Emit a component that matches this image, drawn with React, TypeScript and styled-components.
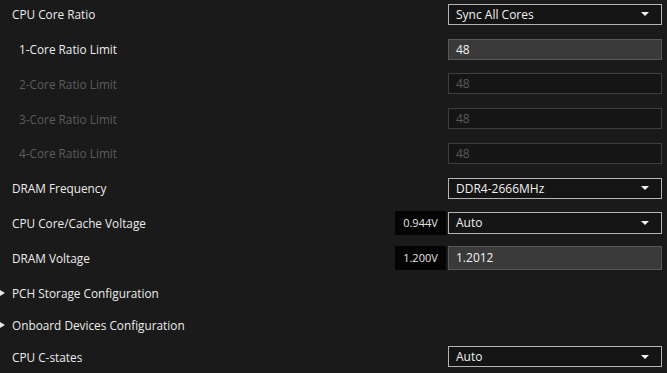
import React from "react";
import styled, { createGlobalStyle } from "styled-components";

const GlobalStyle = createGlobalStyle`
  html, body {
    margin: 0;
    padding: 0;
    background: #1a1a1a;
    overflow: hidden;
  }
  body {
    font-family: "Open Sans", "Noto Sans", sans-serif;
  }
`;

type Level = "main" | "sub" | "disabled" | "link";

type Item = {
  label: string;
  level: Level;
  height: number;
  control?: "select" | "input" | "muted" | null;
  value?: string;
  reading?: string;
};

const items: Item[] = [
  { label: "CPU Core Ratio", level: "main", height: 34.75, control: "select", value: "Sync All Cores" },
  { label: "1-Core Ratio Limit", level: "sub", height: 34.75, control: "input", value: "48" },
  { label: "2-Core Ratio Limit", level: "disabled", height: 34.75, control: "muted", value: "48" },
  { label: "3-Core Ratio Limit", level: "disabled", height: 34.75, control: "muted", value: "48" },
  { label: "4-Core Ratio Limit", level: "disabled", height: 34.75, control: "muted", value: "48" },
  { label: "DRAM Frequency", level: "main", height: 34.75, control: "select", value: "DDR4-2666MHz" },
  { label: "CPU Core/Cache Voltage", level: "main", height: 34.75, control: "select", value: "Auto", reading: "0.944V" },
  { label: "DRAM Voltage", level: "main", height: 34.75, control: "input", value: "1.2012", reading: "1.200V" },
  { label: "PCH Storage Configuration", level: "link", height: 35 },
  { label: "Onboard Devices Configuration", level: "link", height: 29 },
  { label: "CPU C-states", level: "main", height: 35, control: "select", value: "Auto" },
];

export default function App() {
  return (
    <>
      <GlobalStyle />
      <Page>
        <List>
          {items.map((item) => (
            <Row key={item.label} $height={item.height}>
              <Label $level={item.level}>
                {item.level === "link" && <Arrow />}
                {item.label}
              </Label>
              <Controls>
                {item.reading && <Reading>{item.reading}</Reading>}
                {item.control === "select" && (
                  <Select $tall={!!item.reading}>
                    <span>{item.value}</span>
                    <Caret />
                  </Select>
                )}
                {item.control === "input" && (
                  <Field $tall={!!item.reading}>{item.value}</Field>
                )}
                {item.control === "muted" && <MutedField>{item.value}</MutedField>}
              </Controls>
            </Row>
          ))}
        </List>
      </Page>
    </>
  );
}

const Page = styled.div`
  width: 667px;
  height: 373px;
  background: #1a1a1a;
  overflow: hidden;
`;

const List = styled.div`
  display: flex;
  flex-direction: column;
  margin-top: -3px;
`;

const Row = styled.div<{ $height: number }>`
  display: flex;
  align-items: center;
  justify-content: space-between;
  height: ${({ $height }) => $height}px;
  padding-right: 5px;
`;

const Label = styled.div<{ $level: Level }>`
  position: relative;
  font-size: 11.8px;
  padding-left: ${({ $level }) => ($level === "sub" || $level === "disabled" ? 19 : 12)}px;
  color: ${({ $level }) => ($level === "disabled" ? "#5c5c5c" : "#ececec")};
  white-space: nowrap;
`;

const Arrow = styled.span`
  position: absolute;
  left: 0;
  top: 50%;
  margin-top: -3px;
  width: 0;
  height: 0;
  border-top: 3px solid transparent;
  border-bottom: 3px solid transparent;
  border-left: 5px solid #e8e8e8;
`;

const Controls = styled.div`
  display: flex;
  align-items: center;
  gap: 2px;
`;

const Reading = styled.div`
  width: 51px;
  height: 24px;
  display: flex;
  align-items: center;
  justify-content: center;
  background: #040404;
  color: #e2e2e2;
  font-size: 11px;
`;

const Select = styled.div<{ $tall: boolean }>`
  box-sizing: border-box;
  width: 214px;
  height: ${({ $tall }) => ($tall ? 22 : 21)}px;
  display: flex;
  align-items: center;
  justify-content: space-between;
  padding: 0 12px 0 7px;
  background: #141414;
  border: 1.5px solid #b4b4b4;
  color: #f0f0f0;
  font-size: 12px;
`;

const Caret = styled.span`
  width: 0;
  height: 0;
  border-left: 4px solid transparent;
  border-right: 4px solid transparent;
  border-top: 4px solid #f4f4f4;
`;

const Field = styled.div<{ $tall: boolean }>`
  box-sizing: border-box;
  width: 214px;
  height: ${({ $tall }) => ($tall ? 24 : 21)}px;
  display: flex;
  align-items: center;
  padding-left: 7px;
  background: #3a3a3a;
  border: 1px solid #585858;
  color: #f2f2f2;
  font-size: 12px;
`;

const MutedField = styled.div`
  box-sizing: border-box;
  width: 214px;
  height: 21px;
  display: flex;
  align-items: center;
  padding-left: 7px;
  background: #151515;
  border: 1px solid #3e3e3e;
  color: #5a5a5a;
  font-size: 12px;
`;
